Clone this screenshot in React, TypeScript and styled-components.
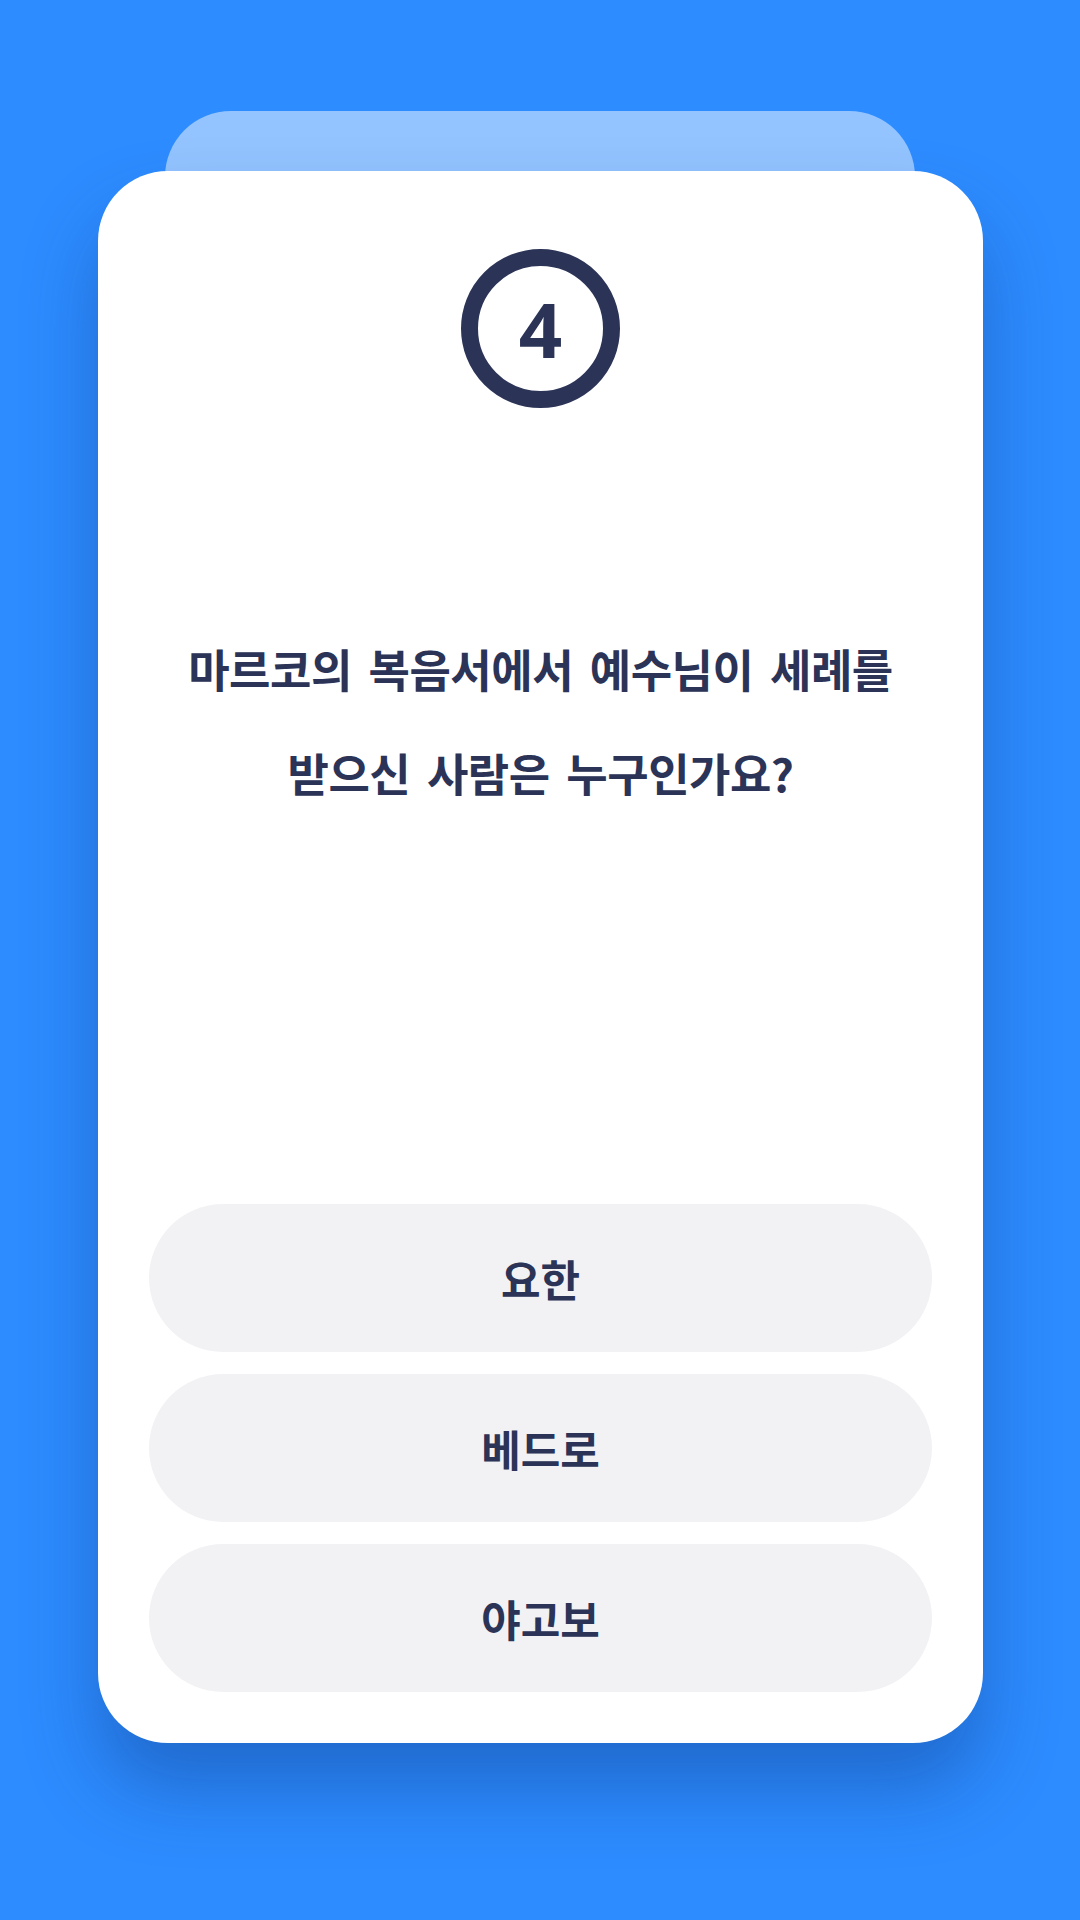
import React from 'react'
import styled, { createGlobalStyle } from 'styled-components'

const GlobalStyle = createGlobalStyle`
  html, body {
    margin: 0;
    padding: 0;
    background: #2d8cff;
  }
  body {
    font-family: "Noto Sans CJK KR", "Noto Sans", sans-serif;
    color: #2b3457;
  }
`

/**
 * Components styles
 */
const Page = styled.main`
  width: 1080px;
  height: 1920px;
  box-sizing: border-box;
  padding: 111px 97px 0 98px;
  background: #2d8cff;
  display: flex;
  flex-direction: column;
`

const BackCard = styled.div`
  height: 130px;
  margin: 0 68px -70px 67px;
  background: #93c4ff;
  border-radius: 66px 66px 0 0;
`

const Card = styled.section`
  position: relative;
  height: 1572px;
  box-sizing: border-box;
  padding: 78px 51px 51px;
  background: #ffffff;
  border-radius: 70px;
  box-shadow: 0 46px 72px rgba(12, 52, 128, 0.38);
  display: flex;
  flex-direction: column;
  align-items: center;
`

const Badge = styled.div`
  width: 159px;
  height: 159px;
  box-sizing: border-box;
  border: 17px solid #2b3457;
  border-radius: 50%;
  display: flex;
  align-items: center;
  justify-content: center;
  font-family: "Noto Sans", "Open Sans", sans-serif;
  font-size: 76px;
  font-weight: 700;
  line-height: 1;
  color: #2b3457;
`

const Question = styled.h2`
  margin: 209px 0 0;
  font-size: 45px;
  font-weight: 700;
  line-height: 104px;
  text-align: center;
  letter-spacing: -0.5px;
  word-spacing: 7px;
  color: #2b3457;
`

const Answers = styled.div`
  margin-top: auto;
  width: 100%;
  display: flex;
  flex-direction: column;
  gap: 22px;
`

const Answer = styled.button`
  width: 100%;
  height: 148px;
  border: none;
  border-radius: 74px;
  background: #f2f2f5;
  font-family: "Noto Sans CJK KR", "Noto Sans", sans-serif;
  font-size: 43px;
  font-weight: 700;
  color: #2b3457;
  cursor: pointer;
`

const answers = ['요한', '베드로', '야고보']

export default function App() {
  return (
    <>
      <GlobalStyle />
      <Page>
        <BackCard />
        <Card>
          <Badge>4</Badge>
          <Question>
            마르코의 복음서에서 예수님이 세례를
            <br />
            받으신 사람은 누구인가요?
          </Question>
          <Answers>
            {answers.map((a) => (
              <Answer key={a}>{a}</Answer>
            ))}
          </Answers>
        </Card>
      </Page>
    </>
  )
}
